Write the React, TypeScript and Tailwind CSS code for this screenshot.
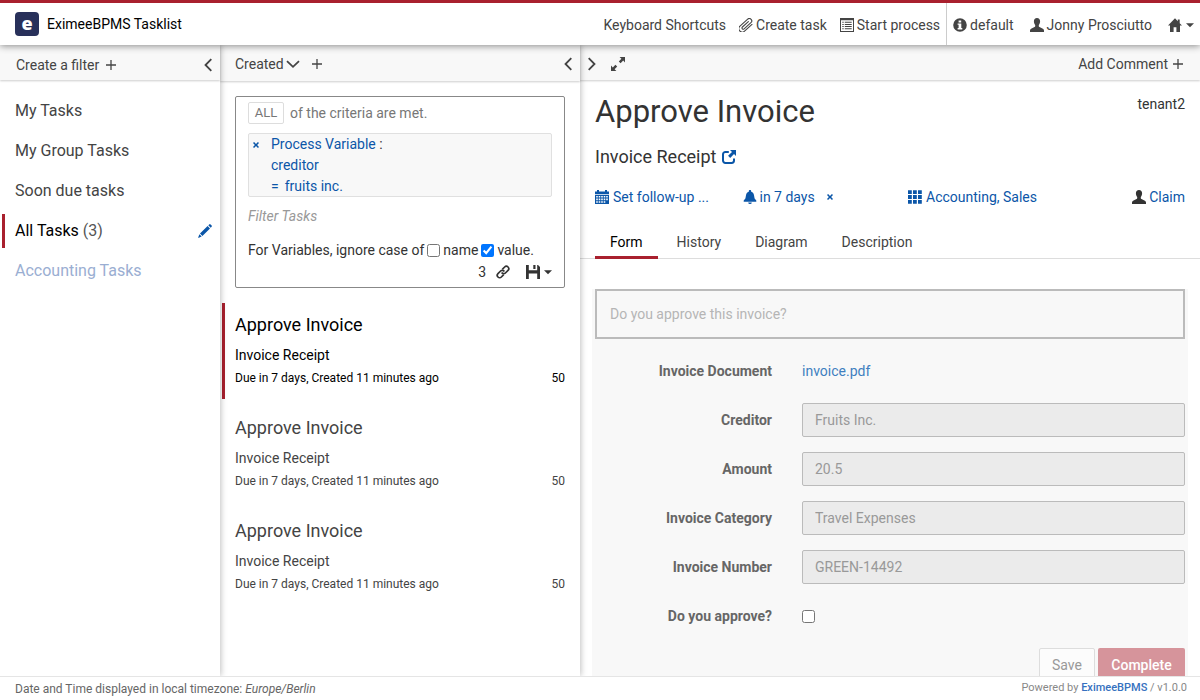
import type { ReactNode } from 'react'

interface IconProps {
  className?: string
  children?: ReactNode
}

function Icon({ className = 'size-3.5', children }: IconProps) {
  return (
    <svg viewBox="0 0 14 14" fill="currentColor" aria-hidden="true" className={`shrink-0 ${className}`}>
      {children}
    </svg>
  )
}

const UserIcon = () => (
  <Icon>
    <path d="M7 0c2 0 3.1 1.3 3.1 3.3 0 1.6-.5 2.7-1.3 3.6V8c0 .5.2.9.7 1.1l3.4 1.7c.7.4 1.1.9 1.1 1.7V14H0v-1.5c0-.8.4-1.3 1.1-1.7l3.4-1.7c.5-.2.7-.6.7-1.1V6.9C4.4 6 3.9 4.9 3.9 3.3 3.9 1.3 5 0 7 0z" />
  </Icon>
)

const HomeIcon = () => (
  <Icon>
    <path d="M7 .3L0 7.6h2V14h3.6V9.2h2.8V14H12V7.6h2l-2.3-2.4V1.5H9.8v1.7z" />
  </Icon>
)

const InfoIcon = () => (
  <Icon>
    <path
      fillRule="evenodd"
      d="M7 .2a6.8 6.8 0 1 1 0 13.6A6.8 6.8 0 0 1 7 .2zM5.6 2.4v2h2.6v-2zM4.6 5.6v1.2h1v3.3h-1v1.3h4.7v-1.3h-1V5.6z"
    />
  </Icon>
)

const PaperclipIcon = () => (
  <Icon>
    <path
      transform="rotate(-42 7 7)"
      fill="none"
      stroke="currentColor"
      strokeWidth="1.1"
      strokeLinecap="round"
      d="M11.8 10.6H1.8a3.4 3.4 0 0 1 0-6.8h10.4a2.4 2.4 0 0 1 0 4.8H3a1.2 1.2 0 0 1 0-2.5h8"
    />
  </Icon>
)

const LinkIcon = () => (
  <Icon>
    <g transform="rotate(-45 7 7)" fill="none" stroke="currentColor" strokeWidth="1.7">
      <path d="M5.6 9.4H2.3a2.4 2.4 0 0 1 0-4.8H6a2.4 2.4 0 0 1 2.3 3" />
      <path d="M8.4 4.6h3.3a2.4 2.4 0 0 1 0 4.8H8a2.4 2.4 0 0 1-2.3-3" />
    </g>
  </Icon>
)

const ListIcon = () => (
  <Icon>
    <path fillRule="evenodd" d="M0 0h14v14H0zM1 2.2V13h12V2.2z" />
    <path d="M2.3 3.7h1.4v1H2.3zM4.8 3.7h6.9v1H4.8zM2.3 5.9h1.4v1H2.3zM4.8 5.9h6.9v1H4.8zM2.3 8.1h1.4v1H2.3zM4.8 8.1h6.9v1H4.8zM2.3 10.3h1.4v1H2.3zM4.8 10.3h6.9v1H4.8z" />
  </Icon>
)

const PlusIcon = () => (
  <Icon className="size-2.5">
    <path d="M6.1 0h1.8v6.1H14v1.8H7.9V14H6.1V7.9H0V6.1h6.1z" />
  </Icon>
)

const chevrons = {
  left: 'M10.3 1.2L4.5 7l5.8 5.8',
  right: 'M3.7 1.2L9.5 7l-5.8 5.8',
  down: 'M1 4.2l6 5.6 6-5.6',
}

const Chevron = ({ to }: { to: keyof typeof chevrons }) => (
  <Icon>
    <path d={chevrons[to]} fill="none" stroke="currentColor" strokeWidth="1.8" />
  </Icon>
)

const ResizeIcon = () => (
  <Icon>
    <path d="M8.6 0H14v5.4l-1.8-1.8L9.6 6.2 7.8 4.4l2.6-2.6zM5.4 14H0V8.6l1.8 1.8 2.6-2.6 1.8 1.8-2.6 2.6z" />
  </Icon>
)

const PencilIcon = () => (
  <Icon>
    <path d="M11.2.4a1 1 0 0 1 1.4 0l1 1a1 1 0 0 1 0 1.4l-.9.9-2.4-2.4zM9.6 2L12 4.4 4.4 12 2 9.6zM1.4 10.3l2.3 2.3L0 14z" />
  </Icon>
)

const FloppyIcon = () => (
  <Icon>
    <path d="M0 0h2.8v5.2h8.4V0H12l2 2v12h-2.8V8.6H2.8V14H0zM7.3 0h2.2v4H7.3z" />
  </Icon>
)

const CalendarIcon = () => (
  <Icon>
    <path d="M0 1.4h2V0h2v1.4h6V0h2v1.4h2v2.8H0z" />
    <path
      fillRule="evenodd"
      d="M0 5h14v9H0zM1.2 6v1.6h1.6V6zM3.7 6v1.6h1.6V6zM6.2 6v1.6h1.6V6zM8.7 6v1.6h1.6V6zM11.2 6v1.6h1.6V6zM1.2 8.6v1.6h1.6V8.6zM3.7 8.6v1.6h1.6V8.6zM6.2 8.6v1.6h1.6V8.6zM8.7 8.6v1.6h1.6V8.6zM11.2 8.6v1.6h1.6V8.6zM1.2 11.2v1.6h1.6v-1.6zM3.7 11.2v1.6h1.6v-1.6zM6.2 11.2v1.6h1.6v-1.6zM8.7 11.2v1.6h1.6v-1.6z"
    />
  </Icon>
)

const BellIcon = () => (
  <Icon>
    <path d="M7 0c.7 0 1.2.5 1.2 1.2v.5c1.7.5 2.5 1.7 2.8 3.5l.6 3.4 1.7 2v1.2H.7v-1.2l1.7-2L3 5.2c.3-1.8 1.1-3 2.8-3.5v-.5C5.8.5 6.3 0 7 0zM5.2 12.5h3.6a1.8 1.5 0 0 1-3.6 0z" />
  </Icon>
)

const GridIcon = () => (
  <Icon>
    <path d="M0 .2h3.8V4H0zM5 .2h3.8V4H5zM10 .2h3.8V4H10zM0 5.1h3.8v3.8H0zM5 5.1h3.8v3.8H5zM10 5.1h3.8v3.8H10zM0 10h3.8v3.8H0zM5 10h3.8v3.8H5zM10 10h3.8v3.8H10z" />
  </Icon>
)

const ShareIcon = () => (
  <Icon>
    <path
      fill="none"
      stroke="currentColor"
      strokeWidth="2"
      d="M6.8 2H3.4A2.4 2.4 0 0 0 1 4.4v6.2A2.4 2.4 0 0 0 3.4 13h6.2a2.4 2.4 0 0 0 2.4-2.4V8.4"
    />
    <path d="M8 0h6v6l-2-2-3.8 3.9-2.1-2.1L10 2z" />
  </Icon>
)

const RemoveIcon = () => (
  <Icon className="size-1.5">
    <path d="M2.5 0L7 4.4 11.5 0 14 2.5 9.6 7l4.4 4.5-2.5 2.5L7 9.6 2.5 14 0 11.5 4.4 7 0 2.5z" />
  </Icon>
)

const Caret = () => (
  <Icon className="size-2">
    <path d="M0 4h14L7 11z" />
  </Icon>
)

const filters = [
  { name: 'My Tasks' },
  { name: 'My Group Tasks' },
  { name: 'Soon due tasks' },
  { name: 'All Tasks', count: 3, active: true },
  { name: 'Accounting Tasks', muted: true },
]

const tasks = [
  { id: 1, active: true },
  { id: 2, active: false },
  { id: 3, active: false },
]

const fields = [
  { id: 'creditor', label: 'Creditor', value: 'Fruits Inc.' },
  { id: 'amount', label: 'Amount', value: '20.5' },
  { id: 'category', label: 'Invoice Category', value: 'Travel Expenses' },
  { id: 'number', label: 'Invoice Number', value: 'GREEN-14492' },
]

const tabs = ['Form', 'History', 'Diagram', 'Description']

function Header() {
  return (
    <header className="relative z-20 flex h-[45px] shrink-0 items-stretch justify-between border-t-[3px] border-[#a9202e] bg-white pl-[15px] shadow-[0_1px_7px_rgba(0,0,0,0.45)]">
      <a href="#home" className="flex items-center gap-2 text-black">
        <span className="flex size-6 items-center justify-center rounded bg-[#28305a] pb-0.5 font-['Open_Sans',sans-serif] text-lg leading-5 font-extrabold text-white">
          e
        </span>
        EximeeBPMS Tasklist
      </a>
      <nav className="flex items-stretch pt-0.5">
        <div className="flex items-center gap-[13px] pr-1.5">
          <a href="#shortcuts">Keyboard Shortcuts</a>
          <a href="#create" className="flex items-center gap-[3px]">
            <PaperclipIcon />
            Create task
          </a>
          <a href="#start" className="flex items-center gap-[3px]">
            <ListIcon />
            Start process
          </a>
        </div>
        <div className="-mt-0.5 flex items-center gap-4 border-l border-[#ccc] pt-0.5 pr-1.5 pl-1.5">
          <a href="#engine" className="flex items-center gap-[3px]">
            <InfoIcon />
            default
          </a>
          <a href="#user" className="flex items-center gap-[3px]">
            <UserIcon />
            Jonny Prosciutto
          </a>
          <button type="button" aria-label="Apps" className="flex items-center gap-1">
            <HomeIcon />
            <Caret />
          </button>
        </div>
      </nav>
    </header>
  )
}

function Filters() {
  return (
    <aside className="relative z-10 w-[220px] shrink-0 bg-white shadow-[1px_0_6px_rgba(0,0,0,0.25)]">
      <div className="flex h-[35px] items-center justify-between bg-[#f8f8f8] pt-1 pr-[5px] pl-4 shadow-[0_1px_2px_rgba(0,0,0,0.2)]">
        <button type="button" className="flex items-center gap-[7px]">
          Create a filter <PlusIcon />
        </button>
        <button type="button" aria-label="Collapse filters">
          <Chevron to="left" />
        </button>
      </div>
      <ul className="pt-3.5 text-base">
        {filters.map((filter) => (
          <li
            key={filter.name}
            className={`mb-1.5 ml-0.5 flex h-[34px] items-center justify-between border-l-[3px] pr-2 pl-2.5 ${
              filter.active ? 'border-[#a9202e]' : 'border-transparent'
            }`}
          >
            <a
              href="#filter"
              className={filter.active ? 'text-black' : filter.muted ? 'text-[#9aaed2]' : 'text-[#444]'}
            >
              {filter.name}
              {filter.count && <span className="text-[#555]"> ({filter.count})</span>}
            </a>
            {filter.active && (
              <button type="button" aria-label="Edit filter" className="text-[#0b56a8]">
                <PencilIcon />
              </button>
            )}
          </li>
        ))}
      </ul>
    </aside>
  )
}

function Search() {
  return (
    <div className="mx-[15px] mt-[15px] flex h-48 flex-col rounded-xs border border-[#888] px-3 pt-[5px] text-[#333]">
      <div className="flex items-center gap-1.5 text-[#777]">
        <button type="button" className="h-[22px] w-9 rounded-xs border border-[#ddd] text-[13px]">
          ALL
        </button>
        of the criteria are met.
      </div>
      <div className="mt-[9px] flex h-16 rounded-xs border border-[#e0e0e0] bg-[#f8f8f8] pl-1 text-[#0b56a8]">
        <button type="button" aria-label="Remove criterion" className="flex h-[22px] w-[18px] items-center">
          <RemoveIcon />
        </button>
        <div className="flex flex-col items-start leading-[21px]">
          <span>
            <button type="button">Process Variable</button> <span className="text-[#333]">:</span>
          </span>
          <button type="button">creditor</button>
          <span className="flex gap-1.5">
            <button type="button">=</button>
            <button type="button">fruits inc.</button>
          </span>
        </div>
      </div>
      <input
        type="text"
        aria-label="Filter Tasks"
        placeholder="Filter Tasks"
        className="mt-[7px] h-6 w-full italic outline-none placeholder:text-[#999]"
      />
      <div className="mt-3 flex h-5 items-center gap-[3px]">
        For Variables, ignore case of
        <label className="flex items-center gap-[3px]">
          <input type="checkbox" className="size-[13px]" />
          name
        </label>
        <label className="flex items-center gap-[3px]">
          <input type="checkbox" defaultChecked className="size-[13px]" />
          value.
        </label>
      </div>
      <div className="mt-0.5 flex h-5 items-center justify-end">
        <span>3</span>
        <button type="button" aria-label="Copy link" className="ml-2.5">
          <LinkIcon />
        </button>
        <button type="button" aria-label="Save query" className="ml-4 flex items-center gap-1">
          <FloppyIcon />
          <Caret />
        </button>
      </div>
    </div>
  )
}

function TaskList() {
  return (
    <section className="relative z-[5] w-[360px] shrink-0 bg-white shadow-[1px_0_6px_rgba(0,0,0,0.25)]">
      <div className="flex h-9 items-center justify-between bg-[#f8f8f8] pt-0.5 pr-[5px] pl-[15px] shadow-[0_1px_2px_rgba(0,0,0,0.2)]">
        <div className="flex items-center gap-3">
          <button type="button" className="flex items-center gap-0.5">
            Created <Chevron to="down" />
          </button>
          <button type="button" aria-label="Add sorting">
            <PlusIcon />
          </button>
        </div>
        <button type="button" aria-label="Collapse tasks">
          <Chevron to="left" />
        </button>
      </div>
      <Search />
      <ol className="mt-[15px]">
        {tasks.map((task) => (
          <li
            key={task.id}
            className={`mb-[7px] ml-0.5 h-24 border-l-[3px] pt-[9px] pr-[15px] pl-2.5 ${
              task.active ? 'border-[#a9202e] text-black' : 'border-transparent text-[#444]'
            }`}
          >
            <h4 className="text-lg leading-[26px]">
              <a href="#task">Approve Invoice</a>
            </h4>
            <p className="mt-[7px] leading-5">Invoice Receipt</p>
            <div className="mt-1 flex justify-between text-xs leading-[18px]">
              <span>Due in 7 days, Created 11 minutes ago</span>
              <span>50</span>
            </div>
          </li>
        ))}
      </ol>
    </section>
  )
}

function TaskForm() {
  return (
    <form className="mx-3 mt-[30px] bg-[#f8f8f8] px-[3px] pb-4 text-[#666]">
      <input
        type="text"
        disabled
        aria-label="Do you approve this invoice?"
        placeholder="Do you approve this invoice?"
        className="h-[50px] w-full border-2 border-[#bbb] px-[13px] placeholder:text-[#b5b5b5]"
      />
      <div className="mt-[15px] grid grid-cols-[177px_1fr] items-center gap-x-[30px] gap-y-[15px]">
        <span className="text-right font-bold">Invoice Document</span>
        <a href="#invoice" className="flex h-[34px] items-center text-[#3f7fc0]">
          invoice.pdf
        </a>
        {fields.map((field) => (
          <div key={field.id} className="contents">
            <label htmlFor={field.id} className="text-right font-bold">
              {field.label}
            </label>
            <input
              id={field.id}
              type="text"
              disabled
              defaultValue={field.value}
              className="h-[34px] w-full rounded-xs border border-[#bbb] bg-[#ebebeb] px-3 text-[#999]"
            />
          </div>
        ))}
        <label htmlFor="approved" className="flex h-[34px] items-center justify-end font-bold">
          Do you approve?
        </label>
        <input id="approved" type="checkbox" className="size-[13px]" />
      </div>
      <div className="mt-[15px] flex justify-end gap-[3px]">
        <button type="button" className="h-[34px] w-14 rounded-xs border border-[#ddd] bg-[#fcfcfc] text-[#999]">
          Save
        </button>
        <button type="button" className="h-[34px] w-[87px] rounded-xs bg-[#d6949b] font-medium text-white">
          Complete
        </button>
      </div>
    </form>
  )
}

function TaskView() {
  return (
    <main className="flex min-w-0 flex-1 flex-col overflow-hidden bg-white">
      <div className="flex h-[35px] shrink-0 items-center justify-between bg-[#f8f8f8] pt-0.5 pr-[17px] pl-[5px] shadow-[0_1px_2px_rgba(0,0,0,0.2)]">
        <div className="flex items-center gap-3">
          <button type="button" aria-label="Expand task">
            <Chevron to="right" />
          </button>
          <button type="button" aria-label="Fullscreen">
            <ResizeIcon />
          </button>
        </div>
        <button type="button" className="flex items-center gap-[5px]">
          Add Comment <PlusIcon />
        </button>
      </div>
      <div className="flex items-start justify-between px-[15px] pt-3 text-[#333]">
        <h2 className="text-[31px] leading-10">Approve Invoice</h2>
        <span className="pt-0.5">tenant2</span>
      </div>
      <h3 className="flex items-center gap-1.5 px-[15px] pt-3 text-lg leading-[26px] text-[#333]">
        Invoice Receipt
        <a href="#process" aria-label="Open process" className="text-[#0b56a8]">
          <ShareIcon />
        </a>
      </h3>
      <div className="grid grid-cols-4 px-[15px] pt-[17px] leading-5 text-[#0b56a8]">
        <button type="button" className="flex items-center gap-1">
          <CalendarIcon />
          Set follow-up ...
        </button>
        <span className="flex items-center gap-3">
          <button type="button" className="flex items-center gap-[3px]">
            <BellIcon />
            in 7 days
          </button>
          <button type="button" aria-label="Remove due date">
            <RemoveIcon />
          </button>
        </span>
        <button type="button" className="flex items-center gap-1 pl-[18px] whitespace-nowrap">
          <GridIcon />
          Accounting, Sales
        </button>
        <button type="button" className="flex items-center justify-end gap-[3px]">
          <span className="text-[#333]">
            <UserIcon />
          </span>
          Claim
        </button>
      </div>
      <div role="tablist" className="mt-[19px] flex h-[33px] shrink-0 border-b border-[#ddd] px-[15px]">
        {tabs.map((tab, i) => (
          <button
            key={tab}
            type="button"
            role="tab"
            aria-selected={i === 0}
            className={`mr-1 h-[33px] border-b-[3px] px-[15px] pt-0.5 ${
              i === 0 ? 'border-[#a9202e] text-black' : 'border-transparent'
            }`}
          >
            {tab}
          </button>
        ))}
      </div>
      <div className="min-h-0 flex-1 overflow-hidden">
        <TaskForm />
      </div>
    </main>
  )
}

function Footer() {
  return (
    <footer className="relative z-20 flex h-6 shrink-0 items-center justify-between border-t border-[#e5e5e5] bg-white pr-[13px] pl-[15px] text-xs text-[#666]">
      <span>
        Date and Time displayed in local timezone: <em>Europe/Berlin</em>
      </span>
      <span className="text-[11px] text-[#888]">
        Powered by{' '}
        <a href="#about" className="font-medium text-[#3671c0]">
          EximeeBPMS
        </a>{' '}
        / v1.0.0
      </span>
    </footer>
  )
}

export default function App() {
  return (
    <div className="flex h-screen flex-col overflow-hidden bg-white font-[Roboto,sans-serif] text-sm text-[#444]">
      <Header />
      <div className="flex min-h-0 flex-1">
        <Filters />
        <TaskList />
        <TaskView />
      </div>
      <Footer />
    </div>
  )
}
